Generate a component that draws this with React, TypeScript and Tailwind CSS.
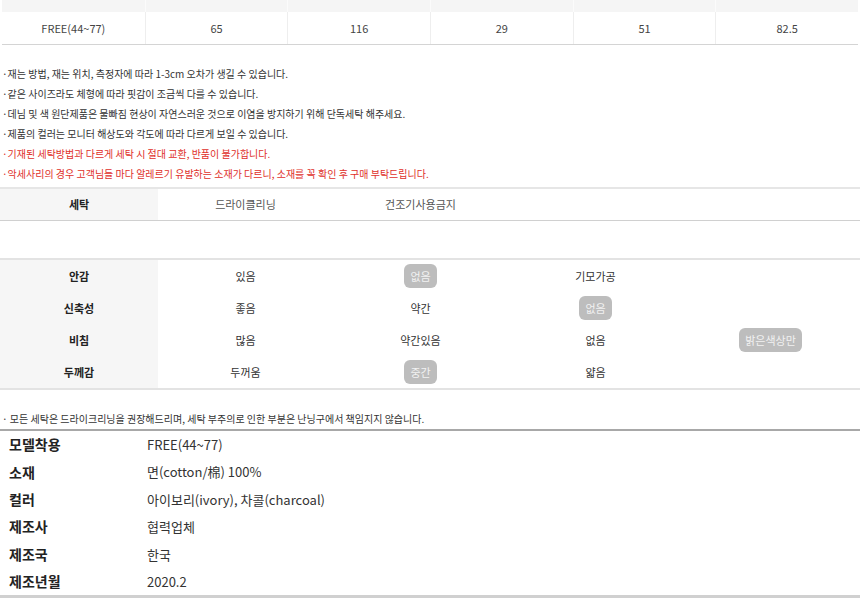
import React from "react";

const font = "font-['Noto_Sans_CJK_KR','Noto_Sans',sans-serif]";

const headers = ["구분", "가슴단면", "총기장뒤", "암홀단면", "소매장", "밑단"];
const values = ["FREE(44~77)", "65", "116", "29", "51", "82.5"];

const notes: { t: string; red?: boolean }[] = [
  { t: "·재는 방법, 재는 위치, 측정자에 따라 1-3cm 오차가 생길 수 있습니다." },
  { t: "·같은 사이즈라도 체형에 따라 핏감이 조금씩 다를 수 있습니다." },
  { t: "·데님 및 색 원단제품은 물빠짐 현상이 자연스러운 것으로 이염을 방지하기 위해 단독세탁 해주세요." },
  { t: "·제품의 컬러는 모니터 해상도와 각도에 따라 다르게 보일 수 있습니다." },
  { t: "·기재된 세탁방법과 다르게 세탁 시 절대 교환, 반품이 불가합니다.", red: true },
  { t: "·악세사리의 경우 고객님들 마다 알레르기 유발하는 소재가 다르니, 소재를 꼭 확인 후 구매 부탁드립니다.", red: true },
];

type Cell = { t: string; on?: boolean } | null;

const props: { label: string; cells: Cell[] }[] = [
  { label: "안감", cells: [{ t: "있음" }, { t: "없음", on: true }, { t: "기모가공" }, null] },
  { label: "신축성", cells: [{ t: "좋음" }, { t: "약간" }, { t: "없음", on: true }, null] },
  { label: "비침", cells: [{ t: "많음" }, { t: "약간있음" }, { t: "없음" }, { t: "밝은색상만", on: true }] },
  { label: "두께감", cells: [{ t: "두꺼움" }, { t: "중간", on: true }, { t: "얇음" }, null] },
];

const specs = [
  ["모델착용", "FREE(44~77)"],
  ["소재", "면(cotton/棉) 100%"],
  ["컬러", "아이보리(ivory), 차콜(charcoal)"],
  ["제조사", "협력업체"],
  ["제조국", "한국"],
  ["제조년월", "2020.2"],
];

function CellView({ c }: { c: Cell }) {
  if (!c) return <div className="flex-1" />;
  return (
    <div className="w-[175px] flex items-center justify-center">
      {c.on ? (
        <span className="h-[24px] px-[6px] rounded-[6px] bg-[#bdbdbd] text-[#f2f2f2] flex items-center leading-none">
          {c.t}
        </span>
      ) : (
        <span className="text-[#333]">{c.t}</span>
      )}
    </div>
  );
}

export default function App() {
  return (
    <div className={`w-[860px] h-[599px] overflow-hidden bg-white ${font}`}>
      {/* size table */}
      <div className="mx-[2px] mt-[-24px] text-[11px]">
        <div className="grid grid-cols-6 h-[36px] bg-[#f5f5f5]">
          {headers.map((h, i) => (
            <div
              key={i}
              className={`flex items-center justify-center font-bold text-[12px] text-[#555] ${i > 0 ? "border-l border-[#fbfbfb]" : ""}`}
            >
              {h}
            </div>
          ))}
        </div>
        <div className="grid grid-cols-6 h-[33px] border-b border-[#d4d4d4]">
          {values.map((v, i) => (
            <div
              key={i}
              className={`flex items-center justify-center text-[#444] ${i > 0 ? "border-l border-[#eeeeee]" : ""}`}
            >
              {v}
            </div>
          ))}
        </div>
      </div>

      {/* notes */}
      <div className="pt-[19px] pl-[2px] text-[10px]">
        {notes.map((n, i) => (
          <div key={i} className={`h-[20px] leading-[20px] ${n.red ? "text-[#e0302a]" : "text-[#333]"}`}>
            {n.t}
          </div>
        ))}
      </div>

      {/* wash table */}
      <div className="mt-[3px] border-t-2 border-[#e6e6e6] border-b border-b-[#d0d0d0] flex h-[34px] text-[11px]">
        <div className="w-[158px] bg-[#f6f6f6] flex items-center justify-center font-bold text-[#222]">세탁</div>
        <div className="w-[175px] flex items-center justify-center text-[#555]">드라이클리닝</div>
        <div className="w-[175px] flex items-center justify-center text-[#555]">건조기사용금지</div>
        <div className="flex-1" />
      </div>

      <div className="h-[37px]" />

      {/* property table */}
      <div className="border-t-2 border-b-2 border-[#e3e3e3] text-[11px]">
        {props.map((r, i) => (
          <div key={i} className="flex h-[32px]">
            <div className="w-[158px] bg-[#f6f6f6] flex items-center justify-center font-bold text-[#222]">
              {r.label}
            </div>
            {r.cells.map((c, j) => (
              <CellView key={j} c={c} />
            ))}
          </div>
        ))}
      </div>

      {/* bottom note */}
      <div className="pt-[19px] pl-[2px] text-[10px] text-[#333] h-[39px] leading-[20px]">
        · 모든 세탁은 드라이크리닝을 권장해드리며, 세탁 부주의로 인한 부분은 난닝구에서 책임지지 않습니다.
      </div>

      {/* spec list */}
      <div className="border-t-2 border-[#a8a8a8] border-b-[3px] border-b-[#d0d0d0]">
        {specs.map(([k, v], i) => (
          <div key={i} className="flex items-center h-[27.4px]">
            <div className="w-[147px] pl-[9px] font-bold text-[14px] text-[#222]">{k}</div>
            <div className="text-[13px] text-[#333]">{v}</div>
          </div>
        ))}
      </div>
    </div>
  );
}
